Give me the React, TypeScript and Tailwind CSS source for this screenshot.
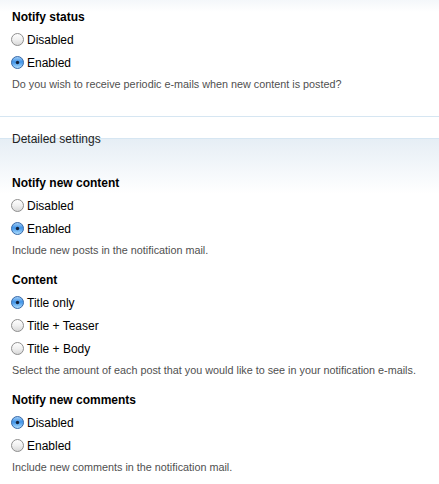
import React from "react";

function Radio({ checked }: { checked?: boolean }) {
  return (
    <svg width="13" height="13" viewBox="0 0 13 13" className="shrink-0">
      <defs>
        <linearGradient id="ru" x1="0" y1="0" x2="0" y2="1">
          <stop offset="0" stopColor="#ffffff" />
          <stop offset="0.5" stopColor="#f0f0f0" />
          <stop offset="1" stopColor="#d6d6d6" />
        </linearGradient>
        <linearGradient id="rc" x1="0" y1="0" x2="0" y2="1">
          <stop offset="0" stopColor="#a9d2f7" />
          <stop offset="0.45" stopColor="#3f93e8" />
          <stop offset="1" stopColor="#b4e2ff" />
        </linearGradient>
      </defs>
      {checked ? (
        <>
          <circle cx="6.5" cy="6.5" r="6" fill="url(#rc)" stroke="#3a6aa8" strokeWidth="1" />
          <circle cx="6.5" cy="6.5" r="1.7" fill="#14233c" />
        </>
      ) : (
        <circle cx="6.5" cy="6.5" r="6" fill="url(#ru)" stroke="#8f8f8f" strokeWidth="1" />
      )}
    </svg>
  );
}

function Option({ label, checked }: { label: string; checked?: boolean }) {
  return (
    <div className="flex items-center h-[23px] pl-[11px]">
      <Radio checked={checked} />
      <span className="ml-[3px] text-[12px] text-black">{label}</span>
    </div>
  );
}

function Group({
  title,
  options,
  desc,
}: {
  title: string;
  options: { label: string; checked?: boolean }[];
  desc: string;
}) {
  return (
    <div>
      <div className="h-[18px] leading-[18px] pl-[12px] text-[12px] font-bold text-black">{title}</div>
      <div className="mt-[2px]">
        {options.map((o) => (
          <Option key={o.label} label={o.label} checked={o.checked} />
        ))}
      </div>
      <div className="mt-[3px] h-[14px] leading-[14px] pl-[12px] text-[10.8px] text-[#505050]">{desc}</div>
    </div>
  );
}

export default function App() {
  return (
    <div
      className="w-[439px] h-[484px] overflow-hidden bg-[linear-gradient(#f4f7fa,#ffffff_12px)]"
      style={{ fontFamily: '"Liberation Sans", Arial, Helvetica, sans-serif' }}
    >
      <div className="pt-[8px]">
        <Group
          title="Notify status"
          options={[{ label: "Disabled" }, { label: "Enabled", checked: true }]}
          desc="Do you wish to receive periodic e-mails when new content is posted?"
        />
      </div>
      <div className="mt-[25px] border-t border-[#d6e6f2]" />
      <div className="mt-[21px] relative border-t border-[#d6e6f2] bg-[linear-gradient(#e6eef5,#ffffff_55px)] pt-[35px]">
        <div className="absolute left-[12px] -top-[9px] h-[18px] leading-[18px] text-[12px] text-[#222]">
          Detailed settings
        </div>
        <Group
          title="Notify new content"
          options={[{ label: "Disabled" }, { label: "Enabled", checked: true }]}
          desc="Include new posts in the notification mail."
        />
        <div className="mt-[14px]">
          <Group
            title="Content"
            options={[
              { label: "Title only", checked: true },
              { label: "Title + Teaser" },
              { label: "Title + Body" },
            ]}
            desc="Select the amount of each post that you would like to see in your notification e-mails."
          />
        </div>
        <div className="mt-[14px]">
          <Group
            title="Notify new comments"
            options={[{ label: "Disabled", checked: true }, { label: "Enabled" }]}
            desc="Include new comments in the notification mail."
          />
        </div>
      </div>
    </div>
  );
}
